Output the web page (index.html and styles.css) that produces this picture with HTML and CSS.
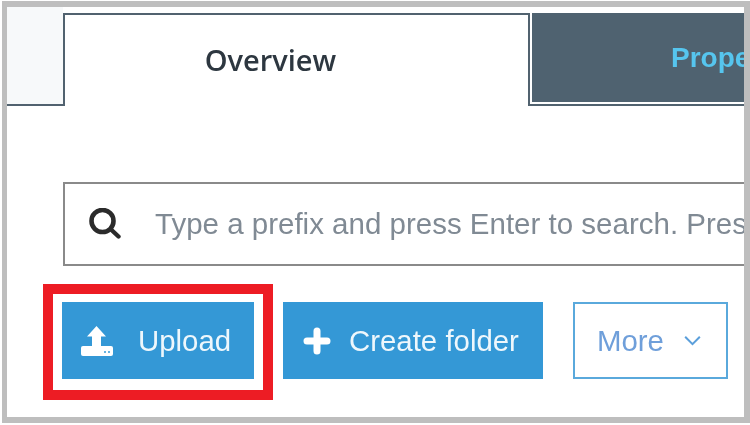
FILE: index.html
```html
<!DOCTYPE html>
<html lang="en">
<head>
<meta charset="utf-8">
<title>Overview</title>
<link rel="stylesheet" href="styles.css">
</head>
<body>
<div class="frame">
  <div class="tabs">
    <div class="tab-spacer"></div>
    <div class="tab tab-active">Overview</div>
    <div class="tab tab-other"><span class="tab-other-inner">Properties</span></div>
  </div>
  <div class="content">
    <div class="search">
      <svg class="search-icon" viewBox="0 0 32 32" aria-hidden="true"><circle cx="13.5" cy="13" r="11" fill="none" stroke="#2b2b2b" stroke-width="4.6"/><path d="M22 21.5L29.5 28.5" fill="none" stroke="#2b2b2b" stroke-width="4.4" stroke-linecap="round"/></svg>
      <span class="search-text">Type a prefix and press Enter to search. Press ESC to clear.</span>
    </div>
    <div class="toolbar">
      <div class="highlight">
        <div class="btn btn-upload">
          <svg class="upload-icon" viewBox="0 0 32 30" aria-hidden="true"><path d="M15.5 0L25 10.5H20V21H11V10.5H6Z" fill="#fff"/><path d="M2 20H30A2 2 0 0 1 32 22V28A2 2 0 0 1 30 30H2A2 2 0 0 1 0 28V22A2 2 0 0 1 2 20Z" fill="#fff"/><circle cx="24" cy="26" r="1" fill="#3498d6"/><circle cx="28" cy="26" r="1" fill="#3498d6"/></svg>
          <span>Upload</span>
        </div>
      </div>
      <div class="btn btn-create">
        <svg class="plus-icon" viewBox="0 0 28 28" aria-hidden="true"><path d="M14 4V24M4 14H24" fill="none" stroke="#fff" stroke-width="7" stroke-linecap="round"/></svg>
        <span>Create folder</span>
      </div>
      <div class="btn btn-more">
        <span>More</span>
        <svg class="chevron" viewBox="0 0 20 12" aria-hidden="true"><path d="M2 2L10 10L18 2" fill="none" stroke="#5b9fdb" stroke-width="2.2"/></svg>
      </div>
    </div>
  </div>
</div>
</body>
</html>
```

FILE: styles.css
```css
* { box-sizing: border-box; }
html, body { margin: 0; padding: 0; background: #fff; }
body { width: 750px; height: 425px; overflow: hidden; font-family: "Liberation Sans", Arial, sans-serif; }
.frame {
  width: 748px;
  height: 422px;
  margin: 1px 0 0 2px;
  border: 6px solid #bebebe;
  border-left-width: 5px;
  overflow: hidden;
  background: #fff;
  filter: blur(0.45px);
}
.tabs { display: flex; height: 99px; background: #fff; }
.tab-spacer {
  width: 56px;
  flex: none;
  background: #f7f9fa;
  border-bottom: 2px solid #51626f;
}
.tab { flex: none; display: flex; align-items: center; justify-content: center; }
.tab-active {
  width: 467px;
  margin-top: 6px;
  padding: 0 52px 2px 0;
  border: 2px solid #51626f;
  border-bottom: 0;
  background: #fff;
  color: #2d3740;
  font-family: "Open Sans", sans-serif;
  font-weight: 600;
  font-size: 29px;
}
.tab-other {
  flex: 1;
  display: block;
  margin-top: 6px;
  padding: 0 0 2px 2px;
  background: #fff;
  border-bottom: 2px solid #51626f;
}
.tab-other-inner {
  display: flex;
  align-items: center;
  height: 100%;
  padding: 0 0 0 139px;
  background: #4f6270;
  color: #56c5ee;
  font-weight: 700;
  font-size: 28px;
  white-space: nowrap;
  overflow: hidden;
}
.content { padding: 76px 0 0 56px; }
.search {
  display: flex;
  align-items: center;
  height: 84px;
  padding-left: 24px;
  border: 2px solid #8a8a8a;
  border-right: 0;
  overflow: hidden;
  white-space: nowrap;
}
.search-icon { width: 32px; height: 32px; flex: none; }
.search-text { margin-left: 34px; color: #808a94; font-size: 29.5px; }
.toolbar { display: flex; align-items: flex-start; margin: 18px 0 0 -20px; }
.highlight { flex: none; padding: 8px 9px 11px; border: 10px solid #ed1c24; background: #fff; }
.btn {
  display: flex;
  align-items: center;
  height: 77px;
  flex: none;
  font-size: 29.4px;
  white-space: nowrap;
}
.btn-upload { width: 192px; padding-left: 19px; background: #3498d6; color: #eef7fc; }
.upload-icon { width: 32px; height: 30px; flex: none; }
.btn-upload span { margin-left: 25px; }
.btn-create { width: 260px; margin: 18px 0 0 10px; padding-left: 20px; background: #3498d6; color: #eef7fc; }
.plus-icon { width: 28px; height: 28px; flex: none; }
.btn-create span { margin-left: 18px; }
.btn-more {
  width: 155px;
  margin: 18px 0 0 30px;
  padding-left: 22px;
  border: 2px solid #5aa9dc;
  background: #fff;
  color: #6f9fda;
}
.chevron { width: 19px; height: 11px; margin-left: 19px; flex: none; }
```
